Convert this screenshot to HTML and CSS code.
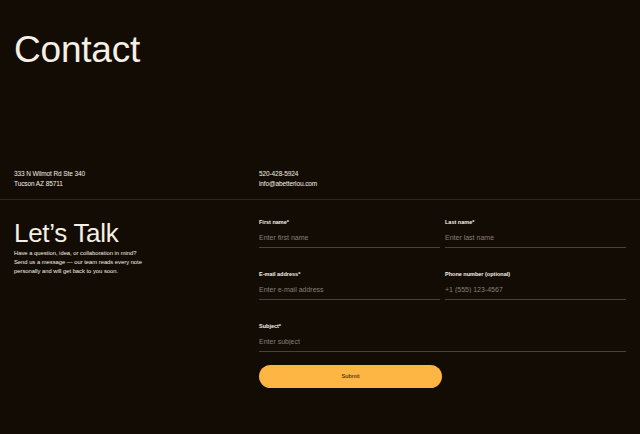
FILE: index.html
```html
<!DOCTYPE html>
<html lang="en">

<head>
    <meta charset="UTF-8">
    <meta name="viewport" content="width=device-width, initial-scale=1.0">
    <title>Contact</title>

    <link rel="stylesheet" href="styles.css">
</head>

<body>
    <header class="top">
        <h1 class="title">Contact</h1>
        <div class="info">
            <p>333 N Wilmot Rd Ste 340<br>Tucson AZ 85711</p>
            <p>520-428-5924<br>info@abetterlou.com</p>
        </div>
    </header>

    <section class="talk">
        <div class="intro">
            <h2>Let’s Talk</h2>
            <p>Have a question, idea, or collaboration in mind?<br>
                Send us a message — our team reads every note<br>
                personally and will get back to you soon.</p>
        </div>

        <form class="form" onsubmit="return false">
            <label class="field">
                <span>First name*</span>
                <input type="text" name="first" placeholder="Enter first name">
            </label>
            <label class="field">
                <span>Last name*</span>
                <input type="text" name="last" placeholder="Enter last name">
            </label>
            <label class="field">
                <span>E-mail address*</span>
                <input type="email" name="email" placeholder="Enter e-mail address">
            </label>
            <label class="field">
                <span>Phone number (optional)</span>
                <input type="tel" name="phone" placeholder="+1 (555) 123-4567">
            </label>
            <label class="field wide">
                <span>Subject*</span>
                <input type="text" name="subject" placeholder="Enter subject">
            </label>
            <div class="actions">
                <button type="submit">Submit</button>
            </div>
        </form>
    </section>
</body>

</html>
```

FILE: styles.css
```css
body {
    font-family: 'Liberation Sans', Arial, sans-serif;
    background-color: #130c04;
    color: #f6f0e4;
    margin: 0;
    padding: 0;
    height: 434px;
    overflow: hidden;
}

.top {
    padding: 32px 14px 0;
    border-bottom: 1px solid #2f271e;
}

.title {
    margin: 0;
    font-size: 37px;
    font-weight: normal;
    line-height: 36px;
    letter-spacing: -0.2px;
}

.info {
    display: grid;
    grid-template-columns: 245px 1fr;
    margin-top: 101px;
    padding-bottom: 10px;
}

.info p {
    margin: 0;
    font-size: 6.5px;
    line-height: 10px;
    letter-spacing: -0.1px;
}

.talk {
    display: grid;
    grid-template-columns: 245px 367px;
    padding: 18px 14px 0;
}

.intro h2 {
    margin: 2px 0 0;
    font-size: 26px;
    font-weight: normal;
    line-height: 26px;
    letter-spacing: -0.3px;
}

.intro p {
    margin: 3px 0 0;
    font-size: 5.8px;
    line-height: 9px;
}

.form {
    display: grid;
    grid-template-columns: 181px 181px;
    column-gap: 5px;
    row-gap: 22px;
}

.field {
    display: flex;
    flex-direction: column;
}

.field span {
    font-size: 5.5px;
    font-weight: bold;
    line-height: 8px;
    margin-bottom: 6px;
}

.field input {
    font-family: inherit;
    font-size: 7px;
    line-height: 10px;
    height: 16px;
    padding: 0 0 5px;
    margin: 0;
    box-sizing: border-box;
    background: transparent;
    color: #f6f0e4;
    border: none;
    border-bottom: 1px solid #4a4136;
    outline: none;
}

.field input::placeholder {
    color: #877f73;
}

.wide {
    grid-column: 1 / 3;
}

.actions {
    grid-column: 1 / 3;
    margin-top: -10px;
}

.actions button {
    width: 183px;
    height: 23px;
    border: none;
    border-radius: 12px;
    background-color: #fdb544;
    color: #140d05;
    font-family: inherit;
    font-size: 5.8px;
    cursor: pointer;
}
```
